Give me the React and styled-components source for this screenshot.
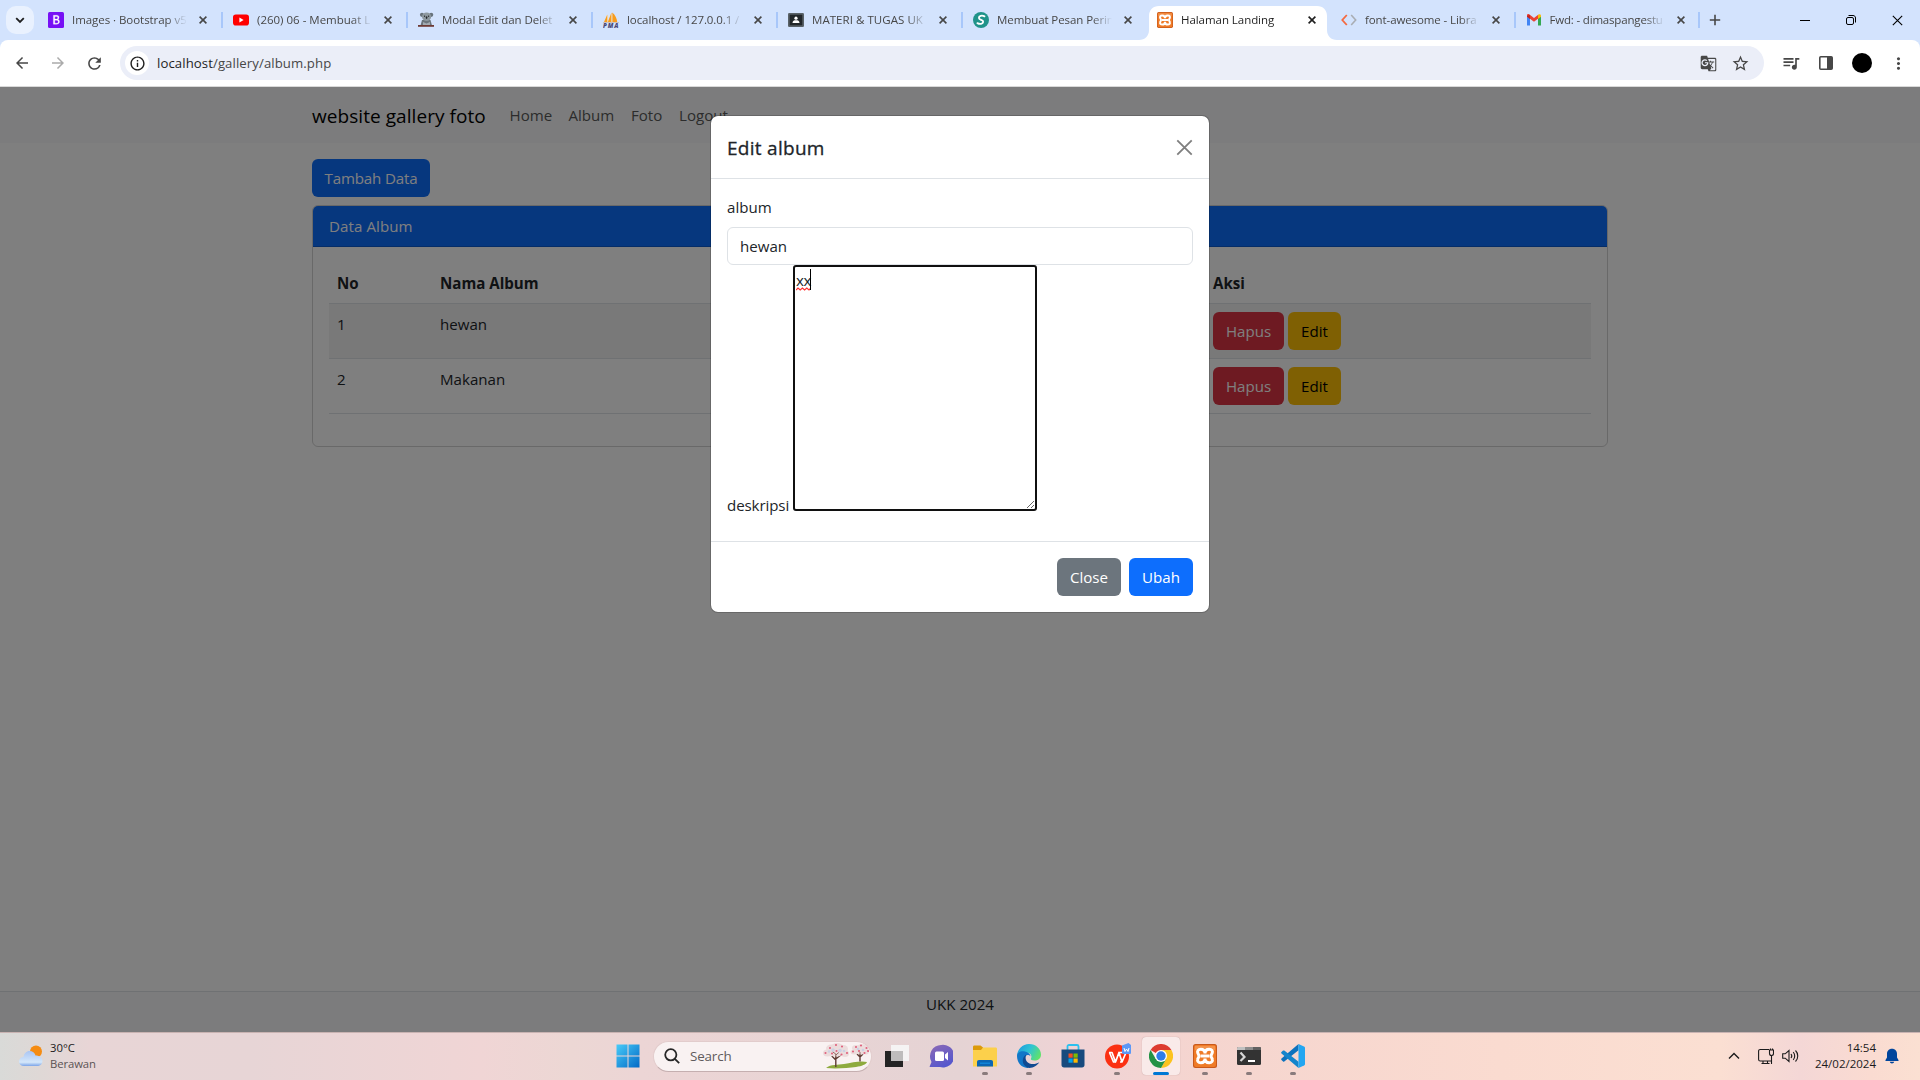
import React from "react";
import styled, { createGlobalStyle, css } from "styled-components";
import { MdArrowBack, MdArrowForward, MdRefresh, MdInfoOutline, MdGTranslate, MdStarBorder, MdQueueMusic, MdMoreVert } from "react-icons/md";

const GlobalStyle = createGlobalStyle`
  * { box-sizing: border-box; }
  body {
    margin: 0;
    overflow: hidden;
    font-family: "Open Sans", "Noto Sans", sans-serif;
    color: #212529;
  }
  svg { display: block; flex: none; }
`;

const Screen = styled.div`
  width: 1920px;
  height: 1080px;
  display: flex;
  flex-direction: column;
  overflow: hidden;
`;

/* ---------- browser chrome ---------- */
const TabStrip = styled.div`
  height: 40px;
  flex: none;
  display: flex;
  background: #d3e3fd;
  padding-left: 6px;
`;
const TabSearch = styled.div`
  width: 28px;
  height: 28px;
  margin: 6px 3px 0 0;
  border-radius: 10px;
  background: #e9f1fe;
  display: flex;
  align-items: center;
  justify-content: center;
`;
const TabBox = styled.div`
  width: ${(p) => p.$w}px;
  height: 40px;
  flex: none;
  position: relative;
  display: flex;
  align-items: center;
  padding: 0 0 0 11px;
  ${(p) =>
    p.$divider &&
    css`
      &::after {
        content: "";
        position: absolute;
        right: -1px;
        top: 12px;
        width: 2px;
        height: 16px;
        background: #a8c7fa;
      }
    `}
`;
const ActiveShape = styled.svg`
  position: absolute;
  left: -7px;
  top: 6px;
`;
const Favicon = styled.div`
  width: 16px;
  height: 16px;
  position: relative;
  flex: none;
`;
const TabTitle = styled.div`
  position: relative;
  width: 115px;
  margin-left: 8px;
  white-space: nowrap;
  font-size: 11.5px;
  line-height: 20px;
  letter-spacing: ${(p) => p.$ls || "-0.1px"};
  color: ${(p) => (p.$active ? "#1f1f1f" : "#474747")};
  mask-image: linear-gradient(to right, #000 95px, transparent 115px);
`;
const TabClose = styled.div`
  position: relative;
  width: 16px;
  margin-left: 8px;
  display: flex;
  justify-content: center;
`;
const NewTab = styled.div`
  width: 32px;
  display: flex;
  align-items: center;
  justify-content: center;
`;
const WindowControls = styled.div`
  margin-left: auto;
  display: flex;
  align-items: center;
`;
const WindowButton = styled.div`
  width: 46px;
  display: flex;
  justify-content: center;
`;
const ToolbarBack = styled.div`
  flex: none;
  background: #d3e3fd;
`;
const Toolbar = styled.div`
  height: 46px;
  background: #fff;
  border-radius: 8px 8px 0 0;
  display: flex;
  align-items: center;
  padding-left: 4px;
  color: #474747;
`;
const ToolbarButton = styled.div`
  width: ${(p) => p.$w || 36}px;
  display: flex;
  justify-content: center;
  color: ${(p) => p.$color || "#474747"};
`;
const Omnibox = styled.div`
  width: 1644px;
  height: 34px;
  margin-left: 8px;
  border-radius: 17px;
  background: #ebeef8;
  display: flex;
  align-items: center;
  padding: 0 8px 0 5px;
`;
const SiteInfo = styled.div`
  width: 24px;
  height: 24px;
  border-radius: 50%;
  background: #fff;
  display: flex;
  align-items: center;
  justify-content: center;
  color: #1f1f1f;
`;
const Url = styled.div`
  flex: 1;
  margin-left: 8px;
  font-size: 13.2px;
  letter-spacing: 0.08px;
  color: #474747;
  b { font-weight: 400; color: #1f1f1f; }
`;
const Avatar = styled.div`
  width: 20px;
  height: 20px;
  border-radius: 50%;
  background: #000;
`;
const ToolbarEdge = styled.div`
  height: 1px;
  flex: none;
  background: #d9d9d9;
`;

/* ---------- page ---------- */
const Page = styled.div`
  height: 945px;
  flex: none;
  position: relative;
  display: flex;
  flex-direction: column;
  background: #fff;
  font-size: 15.1px;
  line-height: 24px;
`;
const Navbar = styled.nav`
  height: 56px;
  background: #f8f9fa;
  display: flex;
  align-items: center;
  padding-left: 312px;
`;
const Brand = styled.div`
  width: 174px;
  margin-right: 23.5px;
  padding-top: 1px;
  white-space: nowrap;
  font-size: 19px;
  line-height: 30px;
  letter-spacing: 0.06px;
  color: #000;
`;
const NavLink = styled.div`
  width: ${(p) => p.$w}px;
  margin-right: 16px;
  white-space: nowrap;
  color: #595959;
`;
const Container = styled.main`
  width: 1296px;
  margin: 16px auto 0;
  display: flex;
  flex-direction: column;
  align-items: flex-start;
  gap: 8px;
`;
const tones = {
  primary: ["#0d6efd", "#fff"],
  secondary: ["#6c757d", "#fff"],
  danger: ["#dc3545", "#fff"],
  warning: ["#ffc107", "#000"],
};
const Button = styled.button`
  width: ${(p) => p.$w}px;
  height: 38px;
  padding: 0;
  border: 0;
  border-radius: 6px;
  font: inherit;
  letter-spacing: ${(p) => p.$ls || "0"};
  white-space: nowrap;
  background: ${(p) => tones[p.$tone][0]};
  color: ${(p) => tones[p.$tone][1]};
`;
const Card = styled.section`
  width: 100%;
  border: 1px solid rgba(0, 0, 0, 0.176);
  border-radius: 6px;
`;
const CardHeader = styled.header`
  height: 41px;
  padding: 8px 16px;
  border-bottom: 1px solid rgba(0, 0, 0, 0.176);
  border-radius: 5px 5px 0 0;
  background: #0d6efd;
  color: #fff;
  letter-spacing: 0.08px;
`;
const CardBody = styled.div`
  padding: 16px 16px 32px;
`;
const Row = styled.div`
  display: grid;
  grid-template-columns: 103px 385px 388px 1fr;
  height: ${(p) => (p.$head ? 41 : 55)}px;
  border-bottom: 1px solid #dee2e6;
  background: ${(p) => (p.$striped ? "#f2f2f2" : "#fff")};
  font-weight: ${(p) => (p.$head ? 700 : 400)};
  font-size: ${(p) => (p.$head ? "15.1px" : "inherit")};
`;
const Cell = styled.div`
  padding: 8px;
  display: flex;
  gap: 4px;
`;
const Footer = styled.footer`
  height: 41px;
  margin-top: auto;
  border-top: 1px solid #dee2e6;
  background: #f8f9fa;
  text-align: center;
`;

/* ---------- modal ---------- */
const Backdrop = styled.div`
  position: absolute;
  inset: 0;
  background: rgba(0, 0, 0, 0.5);
  display: flex;
  align-items: flex-start;
  justify-content: center;
  padding-top: 28px;
`;
const Dialog = styled.div`
  width: 500px;
  border: 1px solid rgba(0, 0, 0, 0.176);
  border-radius: 8px;
  background: #fff;
  background-clip: padding-box;
`;
const DialogHeader = styled.div`
  height: 63px;
  padding: 0 16px;
  border-bottom: 1px solid #dee2e6;
  display: flex;
  align-items: center;
  justify-content: space-between;
`;
const DialogTitle = styled.h1`
  margin: 0;
  padding-top: 2px;
  font-size: 19px;
  font-weight: 500;
  line-height: 30px;
  letter-spacing: 0.28px;
  -webkit-text-stroke: 0.3px #212529;
`;
const DialogBody = styled.div`
  height: 362px;
  padding: 16px;
`;
const Input = styled.input`
  display: block;
  width: 100%;
  height: 38px;
  margin-top: 8px;
  padding: 0 12px;
  border: 1px solid #dee2e6;
  border-radius: 6px;
  font: inherit;
  color: inherit;
`;
const TextRow = styled.div`
  display: flex;
  align-items: flex-end;
`;
const TextLabel = styled.label`
  width: 66px;
  white-space: nowrap;
  letter-spacing: -0.1px;
  margin-bottom: -6px;
`;
const AreaWrap = styled.div`
  position: relative;
  width: 244px;
  height: 246px;
`;
const Area = styled.textarea`
  display: block;
  width: 244px;
  height: 246px;
  padding: 1px;
  border: 2px solid #101010;
  border-radius: 3px;
  outline: 0;
  font: inherit;
  color: inherit;
  letter-spacing: -0.4px;
  resize: both;
`;
const Caret = styled.div`
  position: absolute;
  left: 17px;
  top: 4px;
  width: 1px;
  height: 21px;
  background: #000;
`;
const Squiggle = styled.svg`
  position: absolute;
  left: 3px;
  top: 22px;
`;
const DialogFooter = styled.div`
  height: 71px;
  padding: 0 16px;
  border-top: 1px solid #dee2e6;
  display: flex;
  align-items: center;
  justify-content: flex-end;
  gap: 8px;
`;

/* ---------- taskbar ---------- */
const Taskbar = styled.div`
  height: 48px;
  flex: none;
  position: relative;
  display: flex;
  align-items: center;
  padding-bottom: 1px;
  border-top: 1px solid #c9b3b2;
  background: linear-gradient(to right, #d9dad8 0, #dfd8d6 40px, #e8d5d6 90px, #e7d5d6 250px, #f0d5d5 480px, #ecd7d4 570px, #ecd5d5 640px, #e5d3d4 960px, #f0d3d5 1090px, #f5d5cf 1200px, #fadbd0 1500px, #fbdfd2 1720px, #f4d7d6 1800px, #fadbd1 1870px, #fbe0d2 1920px);
`;
const Weather = styled.div`
  width: 589px;
  padding-left: 18px;
  display: flex;
  align-items: center;
  gap: 7px;
`;
const WeatherText = styled.div`
  font-size: 11.3px;
  line-height: 16px;
  color: #1b1b1b;
  span { display: block; color: #5b5354; letter-spacing: -0.1px; }
`;
const Launcher = styled.div`
  width: 44px;
  height: 46px;
  position: relative;
  display: flex;
  align-items: center;
  justify-content: center;
`;
const StartLauncher = styled(Launcher)`
  width: 64px;
  padding-left: 14px;
`;
const LauncherTile = styled.div`
  width: 38px;
  height: 38px;
  border-radius: 4px;
  display: flex;
  align-items: center;
  justify-content: center;
  background: ${(p) => (p.$active ? "#f9eae9" : "transparent")};
  box-shadow: ${(p) => (p.$active ? "0 0 1px rgba(120,80,80,.5)" : "none")};
`;
const Indicator = styled.div`
  position: absolute;
  bottom: 4px;
  left: 50%;
  width: ${(p) => (p.$active ? 16 : 6)}px;
  height: 3px;
  border-radius: 2px;
  transform: translateX(-50%);
  background: ${(p) => (p.$active ? "#0078d4" : "#897b7c")};
`;
const SearchBox = styled.div`
  width: 219px;
  height: 31px;
  margin-right: 2.5px;
  border: 1px solid #e2cccc;
  border-bottom-color: #c5afb0;
  border-radius: 16px;
  background: #f9f2f2;
  display: flex;
  align-items: center;
  padding: 0 2px 0 10px;
  font-size: 13.4px;
  color: #605b5c;
`;
const SearchText = styled.span`
  flex: 1;
  margin-left: 10px;
  letter-spacing: -0.15px;
`;
const Tray = styled.div`
  margin-left: auto;
  display: flex;
  align-items: center;
  padding-right: 21px;
`;
const Clock = styled.div`
  width: 77px;
  margin: 0 9px 0 0;
  text-align: right;
  font-size: 11.5px;
  line-height: 16px;
  white-space: nowrap;
  color: #1b1b1b;
`;
const TrayIcon = styled.div`
  margin-right: ${(p) => p.$gap}px;
`;

const Cross = ({ size = 8, stroke = 1.6, color = "#474747" }) => (
  <svg width={size} height={size} viewBox="0 0 8 8">
    <path d="M.6.6l6.8 6.8M7.4.6L.6 7.4" stroke={color} strokeWidth={stroke} fill="none" />
  </svg>
);

const XamppIcon = ({ size }) => (
  <svg width={size} height={size} viewBox="0 0 24 24">
    <rect width="24" height="24" rx="2.500" fill="#c9591a" />
    <rect x="1" y="1" width="22" height="22" rx="2" fill="#ef7b27" />
    <path d="M2 2h20v4H2z" fill="#f7a263" opacity=".6" />
    <g fill="none" stroke="#fff" strokeWidth="3">
      <path d="M12 9.500C12 6.500 10.300 5.200 7.800 5.200C5.200 5.200 4.200 7 4.700 8.700C5 10 6 10.700 6 12C6 13.300 5 14 4.700 15.300C4.200 17 5.200 18.800 7.800 18.800C10.300 18.800 12 17.500 12 14.500C12 17.500 13.700 18.800 16.200 18.800C18.800 18.800 19.800 17 19.300 15.300C19 14 18 13.300 18 12C18 10.700 19 10 19.300 8.700C19.800 7 18.800 5.200 16.200 5.200C13.700 5.200 12 6.500 12 9.500Z" />
      <path d="M7.500 12h9" />
    </g>
  </svg>
);

const icons = {
  bootstrap: (
    <svg width="16" height="16" viewBox="0 0 16 16">
      <rect width="16" height="16" rx="1.500" fill="#7710f5" />
      <path d="M5.400 3.300h3.200c1.500 0 2.400.8 2.400 2.100 0 1-.6 1.700-1.400 1.900 1.100.2 1.900 1 1.900 2.200 0 1.700-1.200 2.700-3 2.700H5.400zM6.800 7.100h1.500c1 0 1.500-.5 1.500-1.300S9.300 4.500 8.400 4.500H6.800zM6.800 11.200h1.700c1.100 0 1.700-.5 1.700-1.500s-.7-1.500-1.800-1.500H6.800z" fill="#fff" stroke="#fff" strokeWidth=".3" fillRule="evenodd" />
    </svg>
  ),
  youtube: (
    <svg width="16" height="16" viewBox="0 0 16 16">
      <rect y="2.500" width="16" height="11" rx="2.800" fill="#f00" />
      <path d="M6.400 5.600v4.800L10.600 8z" fill="#fff" />
    </svg>
  ),
  koala: (
    <svg width="16" height="16" viewBox="0 0 16 16">
      <path d="M4 8h8.500l1.500 5.500H2.500z" fill="#6b757c" />
      <circle cx="4" cy="2.800" r="2.100" fill="#68737c" />
      <circle cx="13.200" cy="2.800" r="2.100" fill="#68737c" />
      <ellipse cx="8.600" cy="4.800" rx="4.600" ry="4.200" fill="#8d989f" />
      <circle cx="6.600" cy="4.200" r=".6" fill="#15181a" />
      <circle cx="10.600" cy="4.200" r=".6" fill="#15181a" />
      <ellipse cx="8.600" cy="5.600" rx=".8" ry="1.300" fill="#24282c" />
      <path d="M5 10l3.500 1.500L12 10v3H5z" fill="#a2abb2" />
      <path d="M0 13h16v1.800H0z" fill="#6e3b35" />
    </svg>
  ),
  pma: (
    <svg width="16" height="16" viewBox="0 0 16 16">
      <path d="M4.300 2.500L1 10h3.300zM8.500.5L4.800 10h3.700zM9.300.5c3 2.500 4.700 6 4.900 9.500H9.300z" fill="#f89c1c" />
      <path d="M8.800 2v8M4.600 3v7" stroke="#fcd191" strokeWidth=".8" />
      <path d="M0 10.500h16" stroke="#c5ab9c" strokeWidth=".6" />
      <text x="0" y="15.600" textLength="15.500" fontFamily="Open Sans" fontSize="6.200" fontWeight="800" fontStyle="italic" fill="#4a4a78">PMA</text>
    </svg>
  ),
  classroom: (
    <svg width="16" height="16" viewBox="0 0 16 16">
      <rect y="1" width="16" height="14" rx="1.200" fill="#596268" />
      <rect x="1.700" y="2.700" width="12.600" height="10.600" fill="#22272a" />
      <circle cx="8" cy="6.200" r="1.600" fill="#fff" />
      <path d="M4.500 11c0-2.300 1.500-2.800 3.500-2.800s3.500.5 3.500 2.800z" fill="#fff" />
    </svg>
  ),
  message: (
    <svg width="16" height="16" viewBox="0 0 16 16">
      <circle cx="8" cy="8" r="8" fill="#20938a" />
      <path d="M11.500 4.400C9 3 5.800 3.800 5.900 6c.1 2 4.600 1.700 4.300 3.900-.3 2.100-3.400 2.500-5.800 1.200" fill="none" stroke="#fff" strokeWidth="1.800" strokeLinecap="round" />
    </svg>
  ),
  xampp: <XamppIcon size={16} />,
  code: (
    <svg width="16" height="16" viewBox="0 0 16 16">
      <path d="M5.800 3L1.300 8l4.500 5" fill="none" stroke="#f4693f" strokeWidth="1.800" />
      <path d="M10.200 3l4.500 5-4.500 5" fill="none" stroke="#a9adb3" strokeWidth="1.600" />
    </svg>
  ),
  gmail: (
    <svg width="16" height="16" viewBox="0 0 16 16">
      <path d="M1 4v9.500h3V6z" fill="#4285f4" />
      <path d="M12 6v7.500h3V4z" fill="#34a853" />
      <path d="M1 3.500c0-1.500 1.500-1.800 2.500-1L8 6l4.500-3.500v3.700L8 9.700 1 4.500z" fill="#ea4335" />
      <path d="M12 3c1.300-1.200 3-.8 3 1v.8l-3 2.300z" fill="#fbbc04" />
      <path d="M1 3.700v1.100l3 2.300V3z" fill="#c5221f" />
    </svg>
  ),
};

const tabs = [
  { icon: "bootstrap", title: "Images · Bootstrap v5", divider: true, w: 185, ls: "-0.05px" },
  { icon: "youtube", title: "(260) 06 - Membuat L", divider: true, w: 185, ls: "0" },
  { icon: "koala", title: "Modal Edit dan Delet", divider: true, w: 185, ls: "-0.07px" },
  { icon: "pma", title: "localhost / 127.0.0.1 /", divider: true, w: 185, ls: "-0.08px" },
  { icon: "classroom", title: "MATERI & TUGAS UK", divider: true, w: 185, ls: "0.05px" },
  { icon: "message", title: "Membuat Pesan Perin", w: 184, ls: "-0.08px" },
  { icon: "xampp", title: "Halaman Landing", active: true, w: 184, ls: "-0.05px" },
  { icon: "code", title: "font-awesome - Libra", divider: true, w: 184.5 },
  { icon: "gmail", title: "Fwd: - dimaspangestu", divider: true, w: 184.5, ls: "-0.18px" },
];

const Tab = ({ tab }) => (
  <TabBox $divider={tab.divider} $w={tab.w}>
    {tab.active && (
      <ActiveShape width="198" height="34" viewBox="0 0 198 34">
        <path d="M0 34c6 0 10-4 10-10V10C10 4 14 0 20 0h158c6 0 10 4 10 10v14c0 6 4 10 10 10z" fill="#fff" />
      </ActiveShape>
    )}
    <Favicon>{icons[tab.icon]}</Favicon>
    <TabTitle $active={tab.active} $ls={tab.ls}>{tab.title}</TabTitle>
    <TabClose><Cross color={tab.active ? "#1f1f1f" : "#474747"} /></TabClose>
  </TabBox>
);

const Folder = () => (
  <svg width="24" height="24" viewBox="0 0 24 24">
    <path d="M0 3c0-1 .5-1.500 1.500-1.500h6L10 3.500V7H0z" fill="#dc9a0a" />
    <path d="M0 6h8l2-2.500h12.500c1 0 1.500.5 1.500 1.500v17.500H0z" fill="#fcd04b" />
    <path d="M4 22.500V18c0-1.300.7-2 2-2h12c1.300 0 2 .7 2 2v4.500z" fill="#0b66b4" />
    <path d="M7 18.500h10v1.500H7z" fill="#1184d6" />
  </svg>
);
const Edge = () => (
  <svg width="24" height="24" viewBox="0 0 24 24">
    <defs>
      <linearGradient id="edgeTop" x1="0" x2="1" y1=".2" y2=".6">
        <stop offset="0" stopColor="#1c9ade" />
        <stop offset=".5" stopColor="#2fc3d4" />
        <stop offset="1" stopColor="#60e26a" />
      </linearGradient>
    </defs>
    <path d="M0 12C.3 5 5.500 0 12 0c7 0 12 5 12 10.500 0 4-3 6-6.500 6-3 0-4-1-3.500-2 1.500-2.500-.5-6-5-6C4.500 8.500.5 10 0 12z" fill="url(#edgeTop)" />
    <path d="M0 12c0-3.500 4-5.500 8-4.500 3.500.8 5.500 3 5.500 5-2-2.500-5-1.500-6 1-1.500 4 .5 8.500 4.500 10.500C5 24.500 0 19 0 12z" fill="#1277c8" />
    <path d="M9.500 10.500c-2 3.500-.5 7.500 3 9 3.500 1.200 7 .5 9.800-1.200C20 21.500 16.500 24 12.500 24 6.500 23 4.500 17.500 6.500 13.500c.7-1.500 1.700-2.500 3-3z" fill="#104a91" />
  </svg>
);
const Store = () => (
  <svg width="24" height="24" viewBox="0 0 24 24">
    <path d="M6.500 6V2.500c0-.9.600-1.500 1.500-1.500h8c.9 0 1.500.6 1.500 1.500V6" fill="none" stroke="#2cc0ee" strokeWidth="1.800" />
    <path d="M.5 5.500h23V21c0 1.500-1 2.500-2.500 2.500H3C1.500 23.500.5 22.500.5 21z" fill="#174a7e" />
    <path d="M7.500 9.500h4.200v4.200H7.500z" fill="#f25022" />
    <path d="M12.500 9.500h4.200v4.200h-4.200z" fill="#7fba00" />
    <path d="M7.500 14.500h4.200v4.200H7.500z" fill="#00a4ef" />
    <path d="M12.500 14.500h4.200v4.200h-4.200z" fill="#ffb900" />
  </svg>
);
const Wps = () => (
  <svg width="28" height="28" viewBox="0 0 28 28">
    <circle cx="14" cy="14.500" r="12" fill="#fb3012" />
    <path d="M6 10.500h3l3.500 9.500L16 10.500l3 9.500 4-9.500h-7.500M6.500 10.500L10.500 20h2M17 20h2" fill="none" stroke="#fff" strokeWidth="1.700" strokeLinejoin="round" />
    <path d="M19 3.500L25.500 1l2.500 2v7.500c0 1-.5 1.500-1.500 1.500H21c-1 0-2-.5-2-1.500z" fill="#5c98f7" />
    <path d="M21 6l1 3.500L23.500 7 25 9.500 26 6" fill="none" stroke="#fff" strokeWidth="1" />
  </svg>
);
const Chrome = () => (
  <svg width="24" height="24" viewBox="0 0 24 24">
    <path d="M12 12L1.600 6a12 12 0 0 1 20.800 0z" fill="#dd3b2f" />
    <path d="M12 6h10.400A12 12 0 0 1 12 24l5.200-9z" fill="#fcc31e" />
    <path d="M1.600 6A12 12 0 0 0 12 24l5.200-9-10.400 0z" fill="#259346" />
    <circle cx="12" cy="12" r="6" fill="#fff" />
    <circle cx="12" cy="12" r="4.700" fill="#2f7de9" />
  </svg>
);
const Terminal = () => (
  <svg width="24" height="24" viewBox="0 0 24 24">
    <rect y="3" width="24" height="18" rx="1.500" fill="#333" />
    <path d="M0 6V4.500C0 3.500.5 3 1.500 3H8v3z" fill="#c1c1c1" />
    <path d="M8 3h8v3H8z" fill="#8d8d8d" />
    <path d="M16 3h6.500c1 0 1.500.5 1.500 1.500V6h-8z" fill="#616161" />
    <path d="M3.500 8.500L7.500 13l-4 4" fill="none" stroke="#d6d6d6" strokeWidth="2.200" />
    <path d="M11 17h7" stroke="#fff" strokeWidth="2" />
  </svg>
);
const VsCode = () => (
  <svg width="24" height="24" viewBox="0 0 24 24">
    <path d="M17.500 0v6.300L3.300 17.400c-.4.300-.9.300-1.200 0L.5 16c-.5-.4-.5-1 0-1.400z" fill="#0d72bd" />
    <path d="M17.500 24v-6.300L3.300 6.600c-.4-.3-.9-.3-1.200 0L.5 8c-.5.400-.5 1 0 1.400z" fill="#1485cc" />
    <path d="M17.500 0L23 2.600c.6.300 1 .8 1 1.500v15.800c0 .7-.4 1.200-1 1.500L17.500 24z" fill="#23a6f1" />
  </svg>
);
const TaskView = () => (
  <svg width="24" height="24" viewBox="0 0 24 24">
    <path d="M0 7h18v16H0z" fill="#242424" />
    <path d="M6 1h18v16H6z" fill="#f5f3f3" />
    <path d="M6 7h12v10H6z" fill="#bebcbc" />
  </svg>
);
const Chat = () => (
  <svg width="24" height="24" viewBox="0 0 24 24">
    <defs>
      <linearGradient id="chat" x1="0" x2=".5" y1="0" y2="1">
        <stop offset="0" stopColor="#8d6ab5" />
        <stop offset="1" stopColor="#5557cd" />
      </linearGradient>
    </defs>
    <path d="M12 1a11.300 11.300 0 1 1-1 22H1.200c-.5 0-.7-.5-.4-1L2.500 18A11.300 11.300 0 0 1 12 1z" fill="url(#chat)" />
    <rect x="6" y="7.500" width="9" height="9.500" rx="1.500" fill="#fff" />
    <path d="M16 10.500L19 8v8.500l-3-2.500z" fill="#fff" />
  </svg>
);

const blossoms = [[2.5, 10], [7, 5], [13, 2], [19, 3.5], [24, 10], [9, 10.5], [18.5, 11.5], [13.5, 8], [33, 4], [38, 2.5], [43.5, 5], [30, 8.5], [36, 8], [41.5, 10], [45, 8]];
const canopy = [[4.5, 10, 4.5, 3.5], [8, 5.5, 5, 4], [14, 4, 6, 4], [20.5, 6, 4.5, 4], [22, 10.5, 4, 3.5], [13, 9.5, 8, 4], [33, 5, 4, 3], [39, 4, 5, 3], [43, 8, 3, 3.5], [31.5, 9, 4, 2.5], [38, 8.5, 5, 3]];
const Sakura = () => (
  <svg width="46" height="26" viewBox="0 0 46 26">
    <path d="M3 25c5-4 12-3 18-4 8-1.500 17-3.500 23-2-1 2.500-5 4-11 5-8 1-20 2-30 1z" fill="#8eaa3e" />
    <path d="M12.800 24V12M12.800 17l-4-4M12.800 16l5-4M37 18.500V9M37 14l-3-3M37 14l3-3" stroke="#5e3b34" strokeWidth="1.400" />
    <g fill="#ecdcdc">
      {canopy.map(([x, y, rx, ry]) => <ellipse key={`${x}-${y}`} cx={x} cy={y} rx={rx} ry={ry} />)}
    </g>
    <g fill="#c5cfe6" opacity=".8"><circle cx="10" cy="7" r="1.800" /><circle cx="17" cy="7.500" r="1.800" /><circle cx="6" cy="8.500" r="1.300" /><circle cx="21" cy="8" r="1.300" /><circle cx="35" cy="6" r="1.300" /><circle cx="40" cy="7" r="1.300" /></g>
    {blossoms.map(([x, y]) => <circle key={`${x}-${y}`} cx={x} cy={y} r="1.050" fill="#e0607c" />)}
    <path d="M12.800 15v-4l-3-2M12.800 12l3-2.500M37 13V9" stroke="#7b5149" strokeWidth=".8" fill="none" />
  </svg>
);

const apps = [
  { icon: <TaskView /> },
  { icon: <Chat /> },
  { icon: <Folder />, open: true },
  { icon: <Edge />, open: true },
  { icon: <Store /> },
  { icon: <Wps />, open: true },
  { icon: <Chrome />, open: true, active: true },
  { icon: <XamppIcon size={24} />, open: true },
  { icon: <Terminal />, open: true },
  { icon: <VsCode />, open: true },
];

const albums = ["hewan", "Makanan"];

export default function App() {
  return (
    <Screen>
      <GlobalStyle />
      <TabStrip>
        <TabSearch>
          <svg width="10" height="7" viewBox="0 0 10 7"><path d="M1.200 1.200L5 5l3.800-3.800" fill="none" stroke="#1f1f1f" strokeWidth="1.800" /></svg>
        </TabSearch>
        {tabs.map((tab) => <Tab key={tab.title} tab={tab} />)}
        <NewTab>
          <svg width="12" height="12" viewBox="0 0 12 12"><path d="M6 .8v10.400M.8 6h10.400" stroke="#474747" strokeWidth="1.600" /></svg>
        </NewTab>
        <WindowControls>
          <WindowButton><svg width="10" height="1"><path d="M0 .5h10" stroke="#000" strokeWidth="1" /></svg></WindowButton>
          <WindowButton>
            <svg width="10" height="10" viewBox="0 0 10 10" fill="none" stroke="#000">
              <rect x=".5" y="2.500" width="7" height="7" rx="1.500" /><path d="M2.500.5h4.500c1.500 0 2.500 1 2.500 2.500v4.500" />
            </svg>
          </WindowButton>
          <WindowButton><Cross size={11} stroke={0.8} color="#000" /></WindowButton>
        </WindowControls>
      </TabStrip>
      <ToolbarBack>
        <Toolbar>
          <ToolbarButton><MdArrowBack size={18} /></ToolbarButton>
          <ToolbarButton $color="#ababab"><MdArrowForward size={18} /></ToolbarButton>
          <ToolbarButton><MdRefresh size={19} /></ToolbarButton>
          <Omnibox>
            <SiteInfo><MdInfoOutline size={17} /></SiteInfo>
            <Url><b>localhost</b>/gallery/album.php</Url>
            <ToolbarButton $w={32}><MdGTranslate size={17} /></ToolbarButton>
            <ToolbarButton $w={32}><MdStarBorder size={19} /></ToolbarButton>
          </Omnibox>
          <ToolbarButton $w={54}><MdQueueMusic size={20} /></ToolbarButton>
          <ToolbarButton $w={16}>
            <svg width="16" height="16" viewBox="0 0 16 16"><rect x="1.800" y="1.800" width="12.400" height="12.400" rx="1" fill="none" stroke="#474747" strokeWidth="1.600" /><path d="M9 2h5v12H9z" fill="#474747" /></svg>
          </ToolbarButton>
          <ToolbarButton $w={56}><Avatar /></ToolbarButton>
          <ToolbarButton $w={16}><MdMoreVert size={19} /></ToolbarButton>
        </Toolbar>
      </ToolbarBack>
      <ToolbarEdge />

      <Page>
        <Navbar>
          <Brand>website gallery foto</Brand>
          <NavLink $w={43}>Home</NavLink>
          <NavLink $w={46.5}>Album</NavLink>
          <NavLink $w={32}>Foto</NavLink>
          <NavLink $w={50}>Logout</NavLink>
        </Navbar>
        <Container>
          <Button $tone="primary" $w={118} $ls="-0.15px">Tambah Data</Button>
          <Card>
            <CardHeader>Data Album</CardHeader>
            <CardBody>
              <Row $head>
                <Cell>No</Cell><Cell>Nama Album</Cell><Cell /><Cell>Aksi</Cell>
              </Row>
              {albums.map((name, i) => (
                <Row key={name} $striped={i === 0}>
                  <Cell>{i + 1}</Cell>
                  <Cell>{name}</Cell>
                  <Cell />
                  <Cell>
                    <Button $tone="danger" $w={71}>Hapus</Button>
                    <Button $tone="warning" $w={53}>Edit</Button>
                  </Cell>
                </Row>
              ))}
            </CardBody>
          </Card>
        </Container>
        <Footer>UKK 2024</Footer>

        <Backdrop>
          <Dialog>
            <DialogHeader>
              <DialogTitle>Edit album</DialogTitle>
              <Cross size={17} stroke={0.85} color="#7f7f7f" />
            </DialogHeader>
            <DialogBody>
              <label>album</label>
              <Input readOnly value="hewan" />
              <TextRow>
                <TextLabel>deskripsi</TextLabel>
                <AreaWrap>
                  <Area readOnly value="xx" />
                  <Squiggle width="15" height="4" viewBox="0 0 15 4">
                    <path d="M0 3L2 1l2.200 2L6.400 1l2.200 2 2.200-2L13 3l2-2" fill="none" stroke="#f33" strokeWidth="1.200" />
                  </Squiggle>
                  <Caret />
                </AreaWrap>
              </TextRow>
            </DialogBody>
            <DialogFooter>
              <Button $tone="secondary" $w={64}>Close</Button>
              <Button $tone="primary" $w={64}>Ubah</Button>
            </DialogFooter>
          </Dialog>
        </Backdrop>
      </Page>

      <Taskbar>
        <Weather>
          <svg width="25" height="24" viewBox="0 0 25 24">
            <defs>
              <linearGradient id="cloud" x1="0" x2="0" y1="0" y2="1">
                <stop offset="0" stopColor="#a9c5f3" /><stop offset=".75" stopColor="#d4e7fa" /><stop offset="1" stopColor="#7ba4e8" />
              </linearGradient>
            </defs>
            <circle cx="18" cy="7.500" r="6" fill="#f58c12" />
            <path d="M6 22c-3 0-5-2-5-4.500S3 13 5.500 13C6 9.500 8.500 7 11.500 7s5.500 2 6 4.500c4 0 7 2.200 7 5.500 0 3-2.500 5-5.500 5z" fill="url(#cloud)" />
          </svg>
          <WeatherText>30°C<span>Berawan</span></WeatherText>
        </Weather>
        <StartLauncher>
          <svg width="24" height="24" viewBox="0 0 24 24">
            <defs>
              <linearGradient id="win" x1="0" x2="1" y1="0" y2="1"><stop offset="0" stopColor="#48cbf8" /><stop offset="1" stopColor="#0269c6" /></linearGradient>
            </defs>
            <path d="M.5.5h11v11H.5zM12.500.5h11v11h-11zM.5 12.500h11v11H.5zM12.500 12.500h11v11h-11z" fill="url(#win)" />
          </svg>
        </StartLauncher>
        <SearchBox>
          <svg width="16" height="16" viewBox="0 0 16 16" fill="none" stroke="#272727" strokeWidth="1.800"><circle cx="6.800" cy="6.800" r="5.600" /><path d="M10.800 10.800l4.400 4.400" /></svg>
          <SearchText>Search</SearchText>
          <Sakura />
        </SearchBox>
        {apps.map((app, i) => (
          <Launcher key={i}>
            <LauncherTile $active={app.active}>{app.icon}</LauncherTile>
            {app.open && <Indicator $active={app.active} />}
          </Launcher>
        ))}
        <Tray>
          <TrayIcon $gap={18}>
            <svg width="12" height="8" viewBox="0 0 12 8"><path d="M1 6.500L6 1.500l5 5" fill="none" stroke="#1b1b1b" strokeWidth="1.400" /></svg>
          </TrayIcon>
          <TrayIcon $gap={8}>
            <svg width="16" height="17" viewBox="0 0 16 17" fill="none" stroke="#1b1b1b" strokeWidth="1.100">
              <path d="M11 1.500H2.200C1.200 1.500.6 2 .6 3v8.500c0 1 .6 1.500 1.600 1.500H13M5 13v2.500M9.500 13v2.500M3.500 15.500h8M13.500 8v8" /><path d="M11.500 2h4v3.500c0 1.200-.8 2-2 2s-2-.8-2-2z M12.500 2V.5M14.500 2V.5" />
            </svg>
          </TrayIcon>
          <TrayIcon $gap={0}>
            <svg width="17" height="16" viewBox="0 0 17 16" fill="none" stroke="#1b1b1b" strokeWidth="1.100">
              <path d="M.7 5.800h2.500L7 2.500v11L3.200 10.200H.7zM9 6c.8 1 .8 3 0 4M11.200 4.200c2 2 2 5.600 0 7.600M13.500 2.500c3 3 3 8 0 11" />
            </svg>
          </TrayIcon>
          <Clock>14:54<br />24/02/2024</Clock>
          <svg width="14" height="16" viewBox="0 0 14 16" fill="#00459c"><path d="M7 .8c3 0 5 2.200 5 5v3.700l1.500 2.500c.2.500 0 1-.5 1H1c-.5 0-.7-.5-.5-1L2 9.500V5.800c0-2.800 2-5 5-5zM4.800 13.800h4.400c-.3 1-1.100 1.700-2.200 1.700s-1.900-.7-2.200-1.700z" /></svg>
        </Tray>
      </Taskbar>
    </Screen>
  );
}
